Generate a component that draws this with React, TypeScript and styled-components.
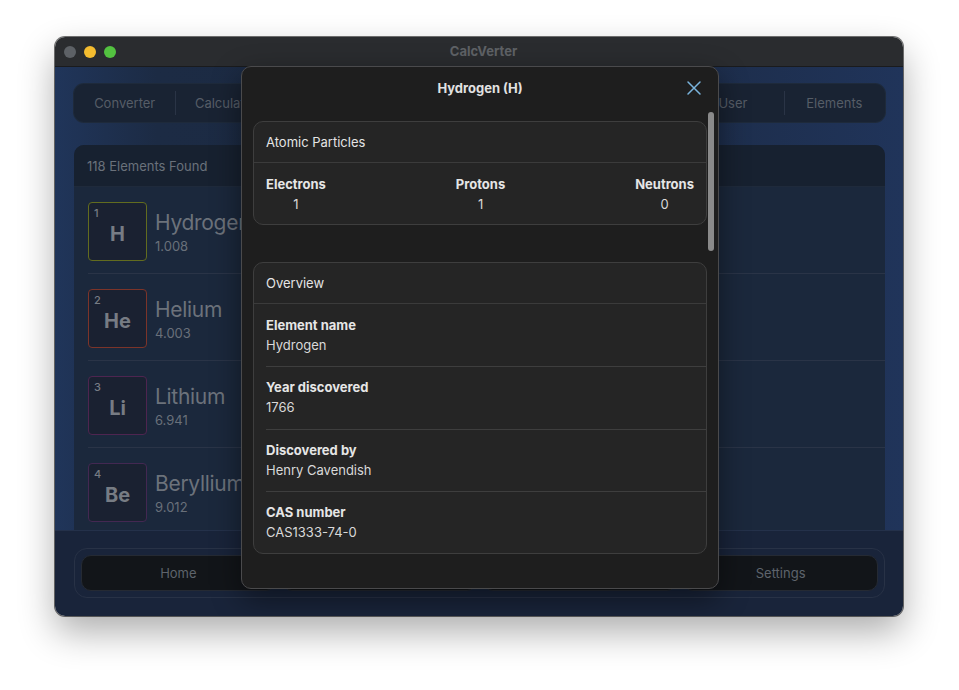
import React from "react";
import styled, { createGlobalStyle } from "styled-components";

const Global = createGlobalStyle`
  html, body { margin: 0; padding: 0; background: #ffffff; }
  body { font-family: Inter, "Noto Sans", "Liberation Sans", sans-serif; -webkit-font-smoothing: antialiased; }
  * { box-sizing: border-box; }
`;

const Page = styled.div`
  width: 959px;
  height: 690px;
  padding: 37px 0 0 55px;
`;

const Window = styled.div`
  position: relative;
  width: 848px;
  height: 579px;
  border-radius: 10px;
  overflow: hidden;
  display: flex;
  flex-direction: column;
  box-shadow: 0 0 0 1px rgba(0, 0, 0, 0.55), 0 16px 36px rgba(0, 0, 0, 0.32);
`;

const TitleBar = styled.div`
  height: 30px;
  flex: none;
  background: #2a2c2f;
  display: grid;
  grid-template-columns: 1fr auto 1fr;
  align-items: center;
  padding: 0 0 2px 9px;
  border-bottom: 1px solid #1a1b1d;
`;

const Lights = styled.div`
  display: flex;
  gap: 8px;
  padding-top: 2px;
`;

const Light = styled.span<{ $c: string }>`
  width: 12px;
  height: 12px;
  border-radius: 50%;
  background: ${(p) => p.$c};
`;

const Title = styled.div`
  font-size: 13px;
  font-weight: 700;
  color: #5f6266;
`;

const Content = styled.div`
  flex: 1;
  min-height: 0;
  display: flex;
  flex-direction: column;
  gap: 23px;
  padding: 17px 18px 0 19px;
  overflow: hidden;
  background: linear-gradient(90deg, #20355a 0%, #1c2b44 12%, #1b2941 60%, #20345a 100%);
`;

const TabBar = styled.div`
  flex: none;
  height: 38px;
  border-radius: 10px;
  background: #192333;
  box-shadow: 0 0 0 1px #1e2a3b;
  display: grid;
  grid-template-columns: repeat(8, 1fr);
  align-items: center;
`;

const Tab = styled.div<{ $first?: boolean }>`
  position: relative;
  text-align: center;
  font-size: 13px;
  color: #565d67;
  &::before {
    content: "";
    display: ${(p) => (p.$first ? "none" : "block")};
    position: absolute;
    left: 0;
    top: -4px;
    bottom: -4px;
    width: 1px;
    background: #2a3446;
  }
`;

const ListCard = styled.div`
  flex: 1;
  min-height: 0;
  border-radius: 10px 10px 0 0;
  background: #1b283c;
  overflow: hidden;
`;

const ListHeader = styled.div`
  height: 42px;
  display: flex;
  align-items: center;
  padding-left: 13px;
  background: #172130;
  font-size: 13px;
  color: #6a717b;
  border-bottom: 1px solid #1f2a3b;
`;

const Row = styled.div`
  height: 87px;
  padding: 15px 0 0 14px;
  display: flex;
  gap: 8px;
  position: relative;
  &::after {
    content: "";
    position: absolute;
    left: 14px;
    right: 0;
    bottom: 0;
    height: 1px;
    background: #2a3447;
  }
`;

const ElBox = styled.div<{ $c: string }>`
  width: 59px;
  height: 59px;
  border: 1.5px solid ${(p) => p.$c};
  border-radius: 4px;
  background: #1a2131;
  position: relative;
  display: flex;
  align-items: center;
  justify-content: center;
  padding-top: 4px;
  font-size: 20px;
  font-weight: 700;
  color: #777c84;
`;

const ElNum = styled.span`
  position: absolute;
  left: 5px;
  top: 3px;
  font-size: 11px;
  font-weight: 500;
  color: #777c84;
`;

const ElText = styled.div`
  display: flex;
  flex-direction: column;
  padding-top: 6px;
`;

const ElName = styled.div`
  font-size: 21px;
  letter-spacing: -0.3px;
  color: #6c727b;
  line-height: 30px;
`;

const ElWeight = styled.div`
  font-size: 13px;
  color: #69707a;
  line-height: 16px;
`;

const BottomBar = styled.div`
  flex: none;
  height: 86px;
  background: #19243a;
  border-top: 1px solid #24314a;
  padding: 17px 18px 0 19px;
`;

const NavWrap = styled.div`
  height: 50px;
  border: 1px solid #283246;
  border-radius: 13px;
  padding: 6px;
  display: grid;
  grid-template-columns: repeat(4, 1fr);
  gap: 6px;
`;

const NavButton = styled.div`
  border-radius: 10px;
  background: #121519;
  border: 1px solid #252a33;
  display: flex;
  align-items: center;
  justify-content: center;
  font-size: 13px;
  color: #5e646c;
`;

const Modal = styled.div`
  position: absolute;
  left: 186px;
  top: 29px;
  width: 478px;
  height: 523px;
  background: #1e1e1e;
  border: 1px solid #4a4a4c;
  border-radius: 10px;
  box-shadow: 0 10px 30px rgba(0, 0, 0, 0.45);
  display: flex;
  flex-direction: column;
  overflow: hidden;
`;

const ModalHeader = styled.div`
  height: 42px;
  flex: none;
  position: relative;
  display: flex;
  align-items: center;
  justify-content: center;
  font-size: 13px;
  font-weight: 700;
  color: #e2e2e2;
`;

const CloseBtn = styled.div`
  position: absolute;
  right: 16px;
  top: 13px;
  width: 16px;
  height: 16px;
  display: flex;
`;

const Scroll = styled.div`
  flex: 1;
  position: relative;
  padding: 12px 11px 0 11px;
  display: flex;
  flex-direction: column;
  gap: 37px;
`;

const Thumb = styled.div`
  position: absolute;
  right: 4px;
  top: 3px;
  width: 6px;
  height: 139px;
  border-radius: 3px;
  background: #8a8a8a;
`;

const Card = styled.div`
  width: 454px;
  background: #252525;
  border: 1px solid #3e3e3e;
  border-radius: 10px;
  overflow: hidden;
`;

const CardHeader = styled.div`
  height: 41px;
  display: flex;
  align-items: center;
  padding-left: 12px;
  font-size: 13px;
  color: #e4e4e4;
  border-bottom: 1px solid #3b3b3b;
`;

const Particles = styled.div`
  height: 61px;
  padding: 11px 12px 0 12px;
  display: flex;
  justify-content: space-between;
`;

const Particle = styled.div`
  display: flex;
  flex-direction: column;
  align-items: center;
`;

const Label = styled.div`
  font-size: 13px;
  font-weight: 700;
  line-height: 20px;
  color: #e6e6e6;
`;

const Value = styled.div`
  font-size: 13px;
  line-height: 20px;
  color: #d9d9d9;
`;

const InfoRow = styled.div<{ $divider: boolean; $h: number }>`
  height: ${(p) => p.$h}px;
  padding: 11px 12px 0 12px;
  position: relative;
  &::before {
    content: "";
    display: ${(p) => (p.$divider ? "block" : "none")};
    position: absolute;
    left: 12px;
    right: 0;
    top: 0;
    height: 1px;
    background: #3e3e3e;
  }
`;

const tabs = ["Converter", "Calculator", "Currency", "Units", "Time", "Date", "User", "Elements"];

const elements = [
  { n: 1, s: "H", name: "Hydrogen", w: "1.008", c: "#626c1f" },
  { n: 2, s: "He", name: "Helium", w: "4.003", c: "#7c3429" },
  { n: 3, s: "Li", name: "Lithium", w: "6.941", c: "#4e2550" },
  { n: 4, s: "Be", name: "Beryllium", w: "9.012", c: "#432852" },
];

const info = [
  { l: "Element name", v: "Hydrogen", h: 62 },
  { l: "Year discovered", v: "1766", h: 63 },
  { l: "Discovered by", v: "Henry Cavendish", h: 62 },
  { l: "CAS number", v: "CAS1333-74-0", h: 62 },
];

export default function App() {
  return (
    <>
      <Global />
      <Page>
        <Window>
          <TitleBar>
            <Lights>
              <Light $c="#5d6166" />
              <Light $c="#f4bc2f" />
              <Light $c="#53c240" />
            </Lights>
            <Title>CalcVerter</Title>
            <div />
          </TitleBar>
          <Content>
            <TabBar>
              {tabs.map((t, i) => (
                <Tab key={t} $first={i === 0}>
                  {t}
                </Tab>
              ))}
            </TabBar>
            <ListCard>
              <ListHeader>118 Elements Found</ListHeader>
              {elements.map((e) => (
                <Row key={e.s}>
                  <ElBox $c={e.c}>
                    <ElNum>{e.n}</ElNum>
                    {e.s}
                  </ElBox>
                  <ElText>
                    <ElName>{e.name}</ElName>
                    <ElWeight>{e.w}</ElWeight>
                  </ElText>
                </Row>
              ))}
            </ListCard>
          </Content>
          <BottomBar>
            <NavWrap>
              <NavButton>Home</NavButton>
              <NavButton>Favorites</NavButton>
              <NavButton>History</NavButton>
              <NavButton>Settings</NavButton>
            </NavWrap>
          </BottomBar>
          <Modal>
            <ModalHeader>
              Hydrogen (H)
              <CloseBtn>
                <svg width="16" height="16" viewBox="0 0 16 16">
                  <path d="M2 2 L14 14 M14 2 L2 14" stroke="#7ab4dd" strokeWidth="1.5" strokeLinecap="round" fill="none" />
                </svg>
              </CloseBtn>
            </ModalHeader>
            <Scroll>
              <Thumb />
              <Card>
                <CardHeader>Atomic Particles</CardHeader>
                <Particles>
                  <Particle>
                    <Label>Electrons</Label>
                    <Value>1</Value>
                  </Particle>
                  <Particle>
                    <Label>Protons</Label>
                    <Value>1</Value>
                  </Particle>
                  <Particle>
                    <Label>Neutrons</Label>
                    <Value>0</Value>
                  </Particle>
                </Particles>
              </Card>
              <Card>
                <CardHeader>Overview</CardHeader>
                {info.map((r, i) => (
                  <InfoRow key={r.l} $divider={i > 0} $h={r.h}>
                    <Label>{r.l}</Label>
                    <Value>{r.v}</Value>
                  </InfoRow>
                ))}
              </Card>
            </Scroll>
          </Modal>
        </Window>
      </Page>
    </>
  );
}
